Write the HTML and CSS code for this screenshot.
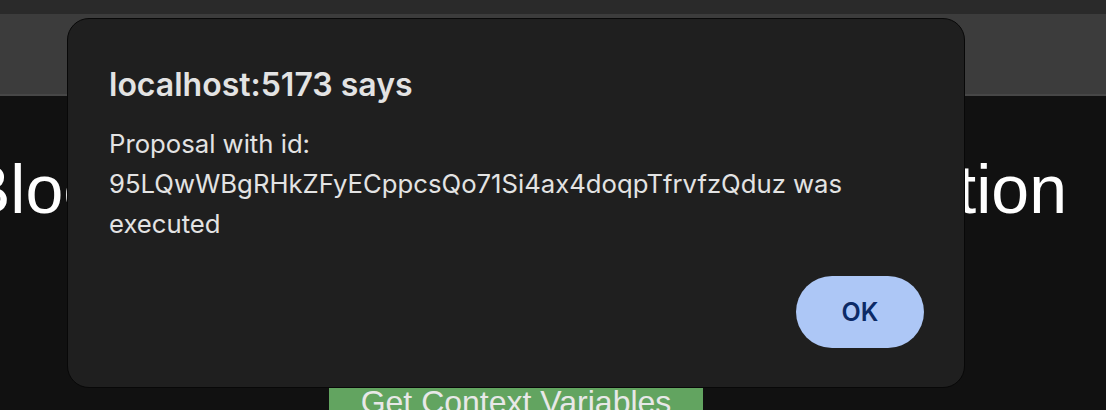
FILE: index.html
```html
<!DOCTYPE html>
<html lang="en">
<head>
<meta charset="utf-8">
<title>localhost:5173</title>
<link rel="stylesheet" href="styles.css">
</head>
<body>
  <div class="chrome">
    <div class="titlebar"></div>
    <div class="toolbar"></div>
  </div>
  <main class="page">
    <h1 class="heading">Blockchain Governance Application</h1>
    <button class="ctx-btn">Get Context Variables</button>
  </main>

  <div class="dialog" role="alertdialog">
    <div class="dialog-title">localhost:5173 says</div>
    <div class="dialog-msg">Proposal with id: 95LQwWBgRHkZFyECppcsQo71Si4ax4doqpTfrvfzQduz was executed</div>
    <div class="dialog-actions">
      <button class="ok-btn">OK</button>
    </div>
  </div>
</body>
</html>
```
FILE: styles.css
```css
html, body {
  margin: 0;
  padding: 0;
  height: 100%;
  overflow: hidden;
}
body {
  background: #111111;
  font-family: "Liberation Sans", Arial, sans-serif;
  position: relative;
}
.chrome {
  display: flex;
  flex-direction: column;
}
.titlebar {
  height: 14px;
  background: #2a2a2a;
}
.toolbar {
  height: 80px;
  background: #3c3c3c;
  border-bottom: 2px solid #474747;
}
.page {
  display: flex;
  flex-direction: column;
  align-items: center;
  padding-right: 74px;
}
.heading {
  margin: 54px 0 0;
  font-family: "Liberation Sans", Arial, sans-serif;
  font-weight: 400;
  font-size: 68px;
  line-height: 78px;
  word-spacing: 18px;
  color: #ffffff;
  white-space: nowrap;
}
.ctx-btn {
  margin-top: 160px;
  background: #62a460;
  color: #e8e8e8;
  border: none;
  font-family: "Liberation Sans", Arial, sans-serif;
  font-size: 32px;
  line-height: 28px;
  padding: 0 20px;
  width: 374px;
  height: 22px;
  overflow: hidden;
  white-space: nowrap;
  display: flex;
  align-items: flex-start;
  justify-content: center;
}
.dialog {
  position: absolute;
  left: 67px;
  top: 18px;
  width: 898px;
  height: 370px;
  box-sizing: border-box;
  background: #1f1f1f;
  border: 1px solid #080808;
  border-radius: 22px;
  padding: 46px 40px 39px 41px;
  display: flex;
  flex-direction: column;
  font-family: Inter, "Noto Sans", sans-serif;
  color: #e3e3e3;
}
.dialog-title {
  font-size: 32px;
  font-weight: 600;
  line-height: 40px;
}
.dialog-msg {
  margin-top: 19px;
  font-size: 25.7px;
  line-height: 40px;
  max-width: 790px;
}
.dialog-actions {
  margin-top: auto;
  display: flex;
  justify-content: flex-end;
}
.ok-btn {
  width: 128px;
  height: 72px;
  border: none;
  border-radius: 36px;
  background: #adc7f6;
  color: #0c2a66;
  font-family: Inter, "Noto Sans", sans-serif;
  font-size: 25px;
  font-weight: 600;
}
```
